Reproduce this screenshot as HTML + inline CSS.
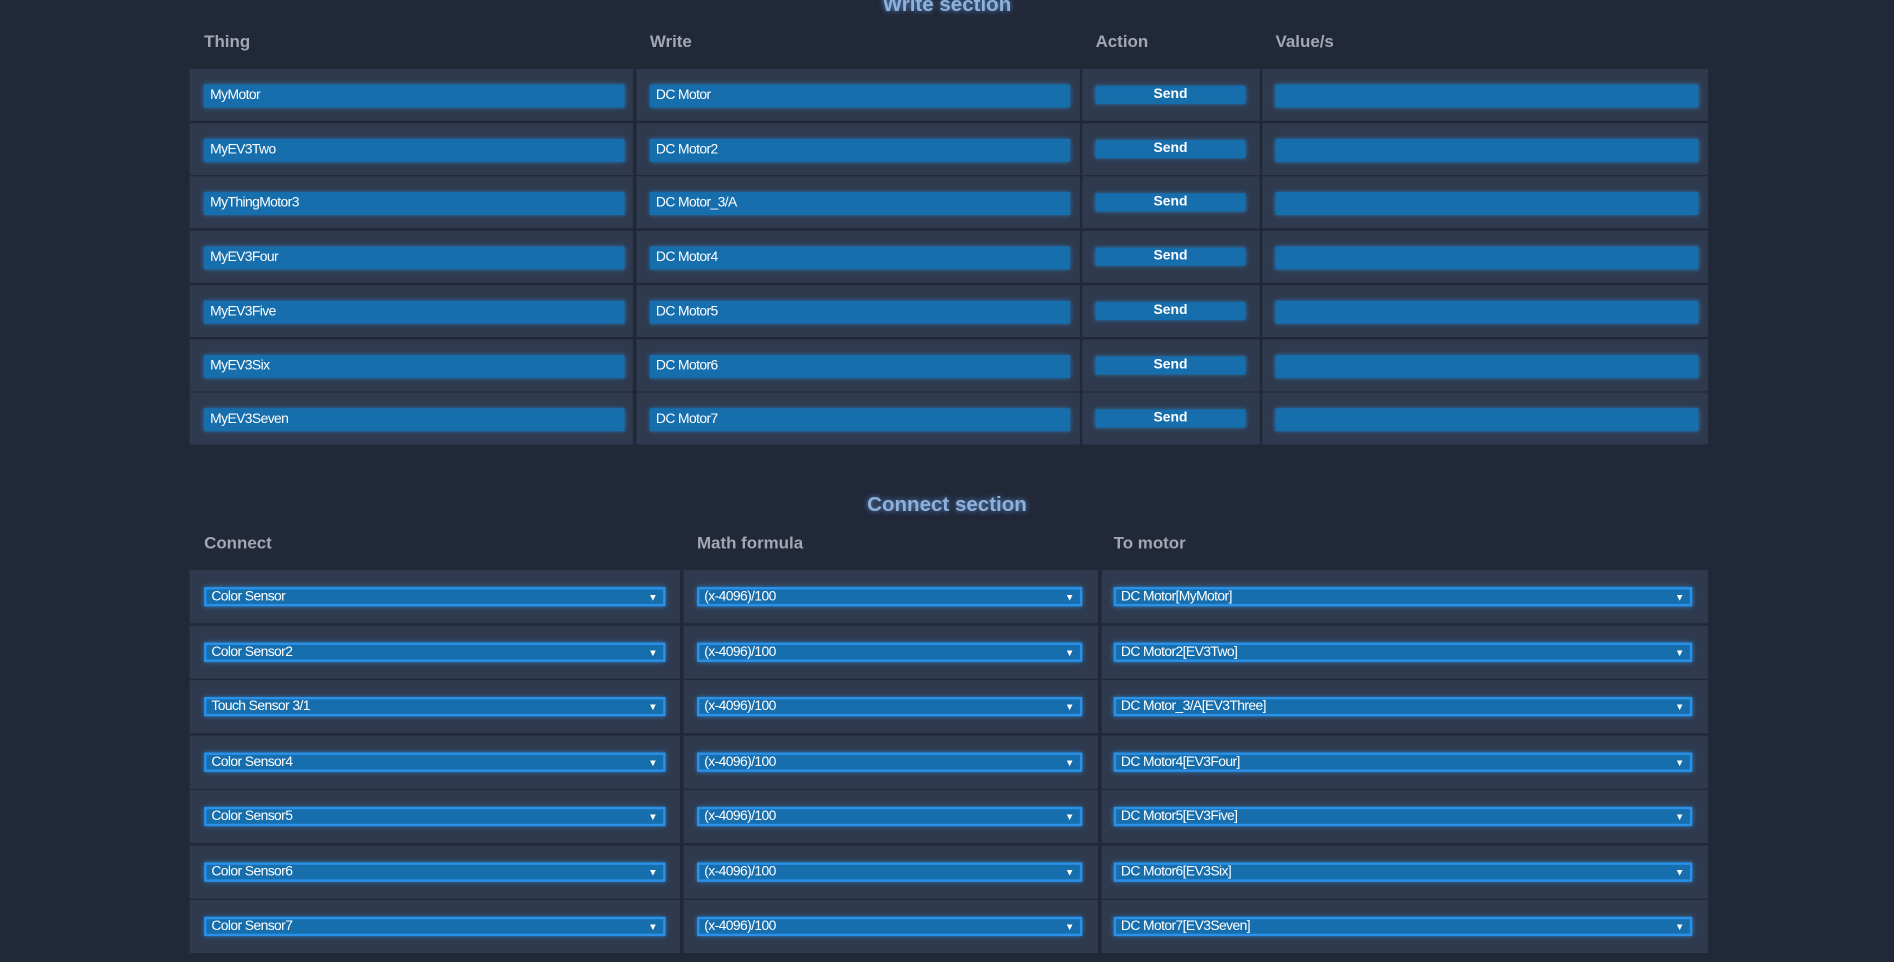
<!DOCTYPE html>
<html><head><style>
html,body{margin:0;padding:0;background:#212838;width:1894px;height:962px;overflow:hidden}
#w{position:absolute;left:0;top:0;width:1568px;height:796px;transform:scale(1.2079);transform-origin:0 0;font-family:"Liberation Sans",sans-serif}
.t{position:absolute;width:100%;text-align:center;color:#8fb0d8;font-weight:bold;font-size:17px;text-shadow:0 0 5px #5a8ed0}
.h{position:absolute;color:#a3a7b3;font-weight:bold;font-size:14px}
.c{position:absolute;background:#2f3a4e}
.i{position:absolute;background:#176ead;box-shadow:0 0 4px #2a7fc0;color:#fff;font-size:11.5px;letter-spacing:-0.5px;box-sizing:border-box;padding-left:5px;line-height:19px;height:19px}
.b{position:absolute;background:#176ead;box-shadow:0 0 4px #2a7fc0;color:#fff;font-size:11.5px;font-weight:bold;text-align:center;height:15px;line-height:15px}
.s{position:absolute;background:#176ead;border:2px solid #2a90e8;box-shadow:0 0 4px #2a7fc0;color:#fff;font-size:11.5px;letter-spacing:-0.5px;box-sizing:border-box;padding-left:4px;height:16px;line-height:13px}
.s:after{content:"▼";position:absolute;right:5px;top:0;font-size:8px}
</style></head><body><div id="w">
<div class="t" style="top:-6px;left:0">Write section</div>
<div class="h" style="left:169px;top:26px">Thing</div>
<div class="h" style="left:538px;top:26px">Write</div>
<div class="h" style="left:907px;top:26px">Action</div>
<div class="h" style="left:1056px;top:26px">Value/s</div>
<div id="wr"></div>
<div class="t" style="top:408px;left:0">Connect section</div>
<div class="h" style="left:169px;top:441px">Connect</div>
<div class="h" style="left:577px;top:441px">Math formula</div>
<div class="h" style="left:922px;top:441px">To motor</div>
<div id="cr"></div>
<script>
var th=["MyMotor","MyEV3Two","MyThingMotor3","MyEV3Four","MyEV3Five","MyEV3Six","MyEV3Seven"];
var wr=["DC Motor","DC Motor2","DC Motor_3/A","DC Motor4","DC Motor5","DC Motor6","DC Motor7"];
var h="";
for(var i=0;i<7;i++){var y=57+44.7*i;
h+='<div class="c" style="left:157px;top:'+y+'px;width:367px;height:43px"></div>';
h+='<div class="c" style="left:527px;top:'+y+'px;width:367px;height:43px"></div>';
h+='<div class="c" style="left:896px;top:'+y+'px;width:147px;height:43px"></div>';
h+='<div class="c" style="left:1045px;top:'+y+'px;width:369px;height:43px"></div>';
h+='<div class="i" style="left:169px;top:'+(y+13)+'px;width:348px">'+th[i]+'</div>';
h+='<div class="i" style="left:538px;top:'+(y+13)+'px;width:348px">'+wr[i]+'</div>';
h+='<div class="b" style="left:907px;top:'+(y+14)+'px;width:124px">Send</div>';
h+='<div class="i" style="left:1056px;top:'+(y+13)+'px;width:350px"></div>';}
document.getElementById("wr").outerHTML=h;
var co=["Color Sensor","Color Sensor2","Touch Sensor 3/1","Color Sensor4","Color Sensor5","Color Sensor6","Color Sensor7"];
var mo=["DC Motor[MyMotor]","DC Motor2[EV3Two]","DC Motor_3/A[EV3Three]","DC Motor4[EV3Four]","DC Motor5[EV3Five]","DC Motor6[EV3Six]","DC Motor7[EV3Seven]"];
h="";
for(i=0;i<7;i++){var y=472+45.5*i;
h+='<div class="c" style="left:157px;top:'+y+'px;width:406px;height:44px"></div>';
h+='<div class="c" style="left:566px;top:'+y+'px;width:343px;height:44px"></div>';
h+='<div class="c" style="left:912px;top:'+y+'px;width:502px;height:44px"></div>';
h+='<div class="s" style="left:169px;top:'+(y+14)+'px;width:382px">'+co[i]+'</div>';
h+='<div class="s" style="left:577px;top:'+(y+14)+'px;width:319px">(x-4096)/100</div>';
h+='<div class="s" style="left:922px;top:'+(y+14)+'px;width:479px">'+mo[i]+'</div>';}
document.getElementById("cr").outerHTML=h;
</script>
</div></body></html>
